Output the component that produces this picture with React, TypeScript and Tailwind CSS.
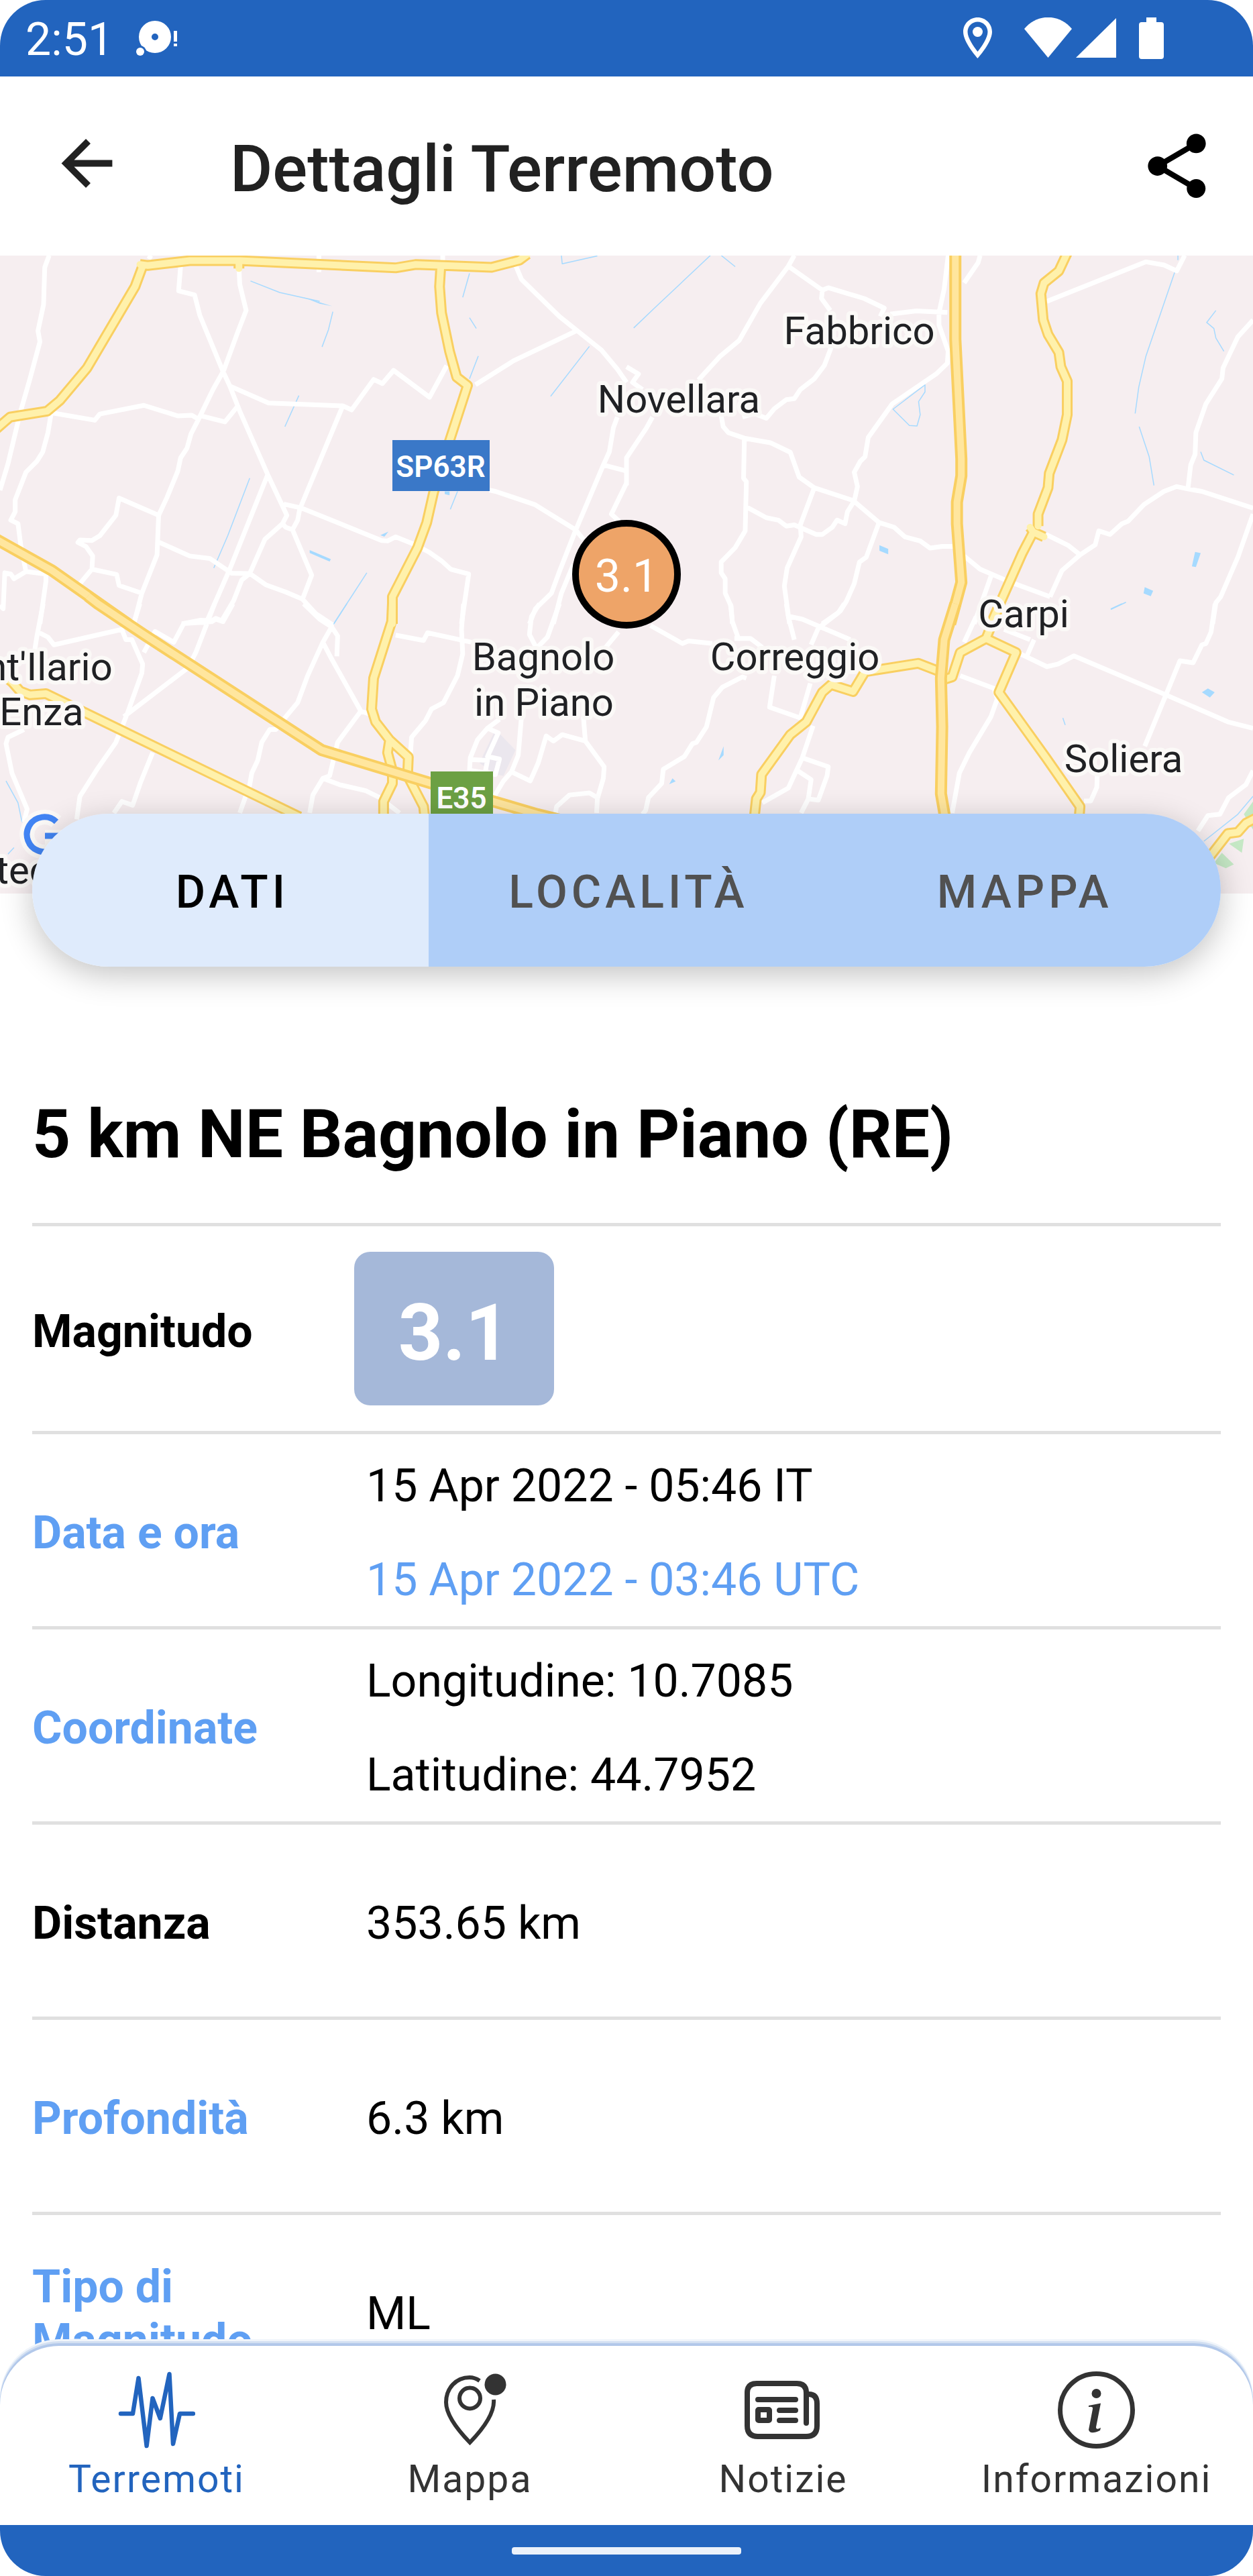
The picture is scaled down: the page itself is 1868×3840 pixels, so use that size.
import { useState } from "react";
import type { ReactNode } from "react";
import { IoArrowBackSharp } from "react-icons/io5";
import { MdShare } from "react-icons/md";

type MapTile = {
  transform: string;
  areas?: { d: string; fill: string }[];
  water: string;
  ponds?: string;
  streets: string;
  roads: string;
  highways: string;
};

// Each tile is drawn on a 1568 square and scaled into place
const TILES: MapTile[] = [
  {
    transform: "translate(0 -11) scale(.5957 .3571)",
    water:
      "M627 137L700 185L800 222M833 265L822 340L806 412M1475 410L1378 618M1197 450L1175 545M1175 105L1158 205M1175 290L1192 335M748 615L713 745M625 960L570 1200L535 1335M918 1355L885 1440L835 1568M1405 30L1407 65L1495 32M1145 1015L1127 1090",
    ponds: "M775 1260L828 1298L825 1308L800 1290L775 1272zM952 1198L972 1183L962 1204zM760 205L832 242L800 232zM1113 1015h12v16l-12-5z",
    streets:
      "M123 30L112 80L109 235L95 345L100 390L75 545L50 690L20 900L0 1010M372 45L378 30M452 75L447 178L487 195L500 280L557 510L575 575L600 680L670 945L718 1115L707 1150L715 1165L732 1175L780 1365L757 1465L790 1525L835 1575M598 80L600 150L616 260L595 350L560 510L533 590L495 720L478 775L468 835L452 875L445 930L418 1040L397 1115L393 1280L355 1440L335 1568M575 575L672 646L858 658L880 675L935 548L957 565L985 510L1075 622L1118 490M858 658L750 1090L745 1135L732 1175M133 688L237 718L250 692L360 656L445 700L480 697L495 712L503 700L563 725L597 655M128 690L120 770L107 850L92 890L65 935L38 1050L38 1100L27 1135L45 1150L52 1240L65 1350L35 1380L27 1360L12 1355L8 1505L0 1490M65 1350L115 1360L115 1390L100 1568M397 1115L298 1043L290 1115L250 1200L230 1220L200 1218L195 1228L215 1245L232 1285L230 1340L200 1400M230 1340L292 1362L298 1408L355 1440M395 1225L475 1285L525 1295L580 1357L625 1358L665 1405L715 1435L757 1465M670 945L575 1340L515 1568M707 1150L663 1215L625 1358L605 1385L585 1470L555 1555L540 1545L530 1555L500 1553L455 1568M710 1068L755 1085L955 1220L970 1222L990 1205L1035 1235L1075 1270L1105 1305L1128 1340L1173 1360L1155 1568M1290 70L1305 130L1400 285L1505 425L1545 505L1568 560M1190 570L1285 470L1440 347M1225 1010L1240 1015L1338 1070L1440 1175L1460 1215M1545 705L1535 750L1525 850L1510 905L1440 1180L1400 1350L1380 1440L1340 1505L1325 1568M1510 905L1568 930M1568 980L1530 1110L1550 1140M1435 1320L1405 1440L1385 1568M798 30V100M1108 30V60",
    roads:
      "M350 68L370 72L475 52L600 52L990 82L1040 68L1110 72L1230 80L1300 50L1320 25M357 75L338 160L218 500L150 635L118 680L25 705L-20 770M598 52V85M1103 80L1100 160L1105 270L1125 430L1143 538L1170 573L1120 830L1085 1020L1068 1145L1045 1250L982 1455L982 1568",
    highways: "M-20 1205L130 1345L320 1568",
  },
  {
    transform: "translate(934 -11) scale(.5957 .3571)",
    water:
      "M210 30L70 250L18 333M237 30L272 77M1380 30V50M1372 100L1300 450L1282 580L1273 690M1283 745L1308 870L1320 990M1475 260L1452 310L1470 335L1475 375L1495 430M1437 850L1445 885L1520 947M747 570L667 672L708 740L727 742L735 695L731 640L747 600zM1212 1508L1250 1478",
    ponds: "M633 1240l22 15v23l-22-15zM1423 1268l14 5l-12 58l-10-3zM1297 1415l21 15l-6 23l-18-12z",
    streets:
      "M420 30L405 75L335 230L282 385L235 450L180 550M405 75L490 175L505 165L595 210L645 250L635 285M490 175L488 210L510 260M805 30L795 170L782 270L782 320L805 430L803 480L775 525L665 650L605 790L597 870L585 890L570 935L578 995L570 1055L553 1100L547 1150L527 1135L515 1165L490 1195L475 1195L420 1155L400 1160L380 1135L350 1125L300 1080M660 275L725 262L803 268M885 30L880 60L845 145M512 415L495 490L470 545L435 590L420 628L400 632L370 670L350 710L320 690L290 705M0 495L30 525L15 560L40 590M237 700L242 745L255 770L295 793L360 812L410 852L432 955L470 1000L567 1053L632 1145L670 1165L697 1205L735 1222L760 1252L790 1245L820 1245M295 793L293 960L300 975L297 1180L272 1250L237 1310L237 1355L247 1380L247 1440L262 1495L265 1568M470 1000L435 1155L437 1205L402 1335L395 1410L408 1568M632 1145L600 1290L583 1310L570 1400L550 1475L535 1515L490 1568M65 705L50 750L0 875L0 990M845 1285L885 1340L955 1390L1060 1455M912 1370L895 1450L870 1568M1050 1195L1105 1240L1135 1280L1090 1345L1060 1455M1135 1280L1173 1238L1182 1180L1210 1195L1240 1150L1255 1140L1295 1070L1345 1015L1377 995L1405 1005L1440 1015L1568 1085M1405 1005L1412 905L1423 860L1425 770L1450 650L1490 545L1493 500L1510 440L1530 370L1568 300M1568 1110L1530 1290L1487 1455L1475 1480L1467 1568M1052 222L1300 57L1345 70L1377 95L1397 30",
    roads:
      "M1103 20L1082 95L1045 145L1037 190L1043 300L1055 360L1082 435L1087 495L1103 555L1103 695L1090 800L1058 940L1055 1000L1030 1110L1030 1160M1010 1165L1018 1185L1045 1205M1018 1185L990 1275L930 1500L912 1568",
    highways: "M823 20V380L838 880L838 950L827 1060L827 1150L838 1395L810 1568",
  },
  {
    transform: "translate(0 519) scale(.5957 .3827)",
    areas: [{ d: "M1240 490L1290 570L1260 670L1240 665L1200 620z", fill: "#ebe7ee" }],
    water: "M868 0L835 80M15 690L45 775L55 850M20 975L35 950",
    streets:
      "M108 0L92 130L85 200M95 110L120 130L135 160L305 100L315 140L330 140L357 235L355 270L318 430L290 540L245 640L200 750L192 840M350 0L330 100M583 0L558 70L540 60L530 70L460 77L435 150L388 108L360 190M537 0L490 190L470 250L310 440M382 580L352 695L332 785L305 770L285 815M60 490L20 520L15 545L30 660L68 800L60 850M760 0L800 60L830 90L845 125L843 205M830 90L808 150L770 280L745 385L710 450L690 490L675 490L655 540L645 610L630 660L625 705L600 815M808 150L830 215L903 418L925 430M903 418L845 540L825 670L808 680L783 745L775 815M808 680L850 705L915 728L950 755L1000 815M990 122L1060 143L1070 113L1180 150M1160 0L1155 100L1158 195L1145 280L1110 385L1080 410L1065 455L1030 520L1027 590M1350 0L1330 50L1325 120L1345 180M1400 0L1370 130L1345 170M1548 110L1510 180M1250 450L1220 485L1195 530L1177 600L1175 650M1220 485L1247 503L1220 595L1250 605L1240 665L1180 650M1177 607L1220 610L1215 650M1305 440L1297 590L1280 655L1260 690L1237 750M1280 655L1327 690L1347 620L1367 515L1385 535L1407 510L1465 535L1460 440M1465 535L1512 635L1510 680L1495 760L1493 815M1390 815L1393 790L1425 745L1475 737L1495 755",
    roads:
      "M982 0L980 70L935 290L930 410L940 460L975 530L1022 597L1020 670L1060 790L1063 830M975 530L970 580L982 650L982 700L960 770L960 830M-10 255L30 305L50 340L75 355L115 350L300 490L750 830",
    highways: "M220 -30L245 0L360 120L805 570L1080 700L1345 820L1500 880",
  },
  {
    transform: "translate(934 519) scale(.5957 .3827)",
    areas: [
      { d: "M1508 935L1545 915L1540 970zM1545 820L1568 770V880zM1470 1010L1490 970L1520 1015L1500 1030z", fill: "#c5e8c5" },
    ],
    water: "M1568 750L1530 820L1445 925M1092 445L1098 472M1212 20L1240 0",
    ponds: "M1440 345L1455 330L1472 345L1460 365zM230 610L243 555L243 590zM107 703L115 680L123 692z",
    streets:
      "M60 85L140 155L155 145L215 155M260 0L265 70L280 135M400 0L405 50L420 140M410 50L440 60L560 140M545 0L530 35L480 95L462 160M270 135L310 135L340 170M300 290L290 285L240 325L218 365L200 480L175 540L165 545L145 595L92 645L88 700L55 755L48 805L40 820M370 280L358 403L435 445L460 310M467 475L440 600L405 718L340 775M440 600L505 635L502 670L480 765L455 760L437 815M428 650L462 685L455 760M875 50L845 150M945 100L1010 140M1020 140L1003 200M985 195L1052 245L1080 235L1120 203L1350 355L1505 460L1568 485M1473 0L1463 110L1450 155L1440 160L1418 230L1385 222L1350 355L1297 555M1178 670L1177 715L1162 768L1145 768M835 280L920 330L928 370L912 440L858 580L833 660L815 815M1568 650L1550 705L1507 755L1485 820L1455 825L1430 885",
    roads:
      "M320 830L325 760L335 735L338 665L410 510L450 460L490 345L512 315L567 342L597 265L730 232L790 268M795 295L815 285L835 190L900 135L975 190L932 345L1050 600L1135 790L1133 830M935 0L900 135M1460 985L1505 895L1530 890L1550 855L1575 835",
    highways: "M823 0L795 140L787 290L790 480L787 740L797 830",
  },
];

const PLACES = [
  { name: "Fabbrico", x: 1281, y: 132 },
  { name: "Novellara", x: 1012, y: 234 },
  { name: "Carpi", x: 1526, y: 554 },
  { name: "Bagnolo", x: 810, y: 618 },
  { name: "in Piano", x: 811, y: 686 },
  { name: "Correggio", x: 1185, y: 618 },
  { name: "Soliera", x: 1675, y: 770 },
  { name: "nt'Ilario", x: 73, y: 633 },
  { name: "Enza", x: 62, y: 700 },
  { name: "tec", x: 34, y: 936 },
];

const TABS = ["DATI", "LOCALITÀ", "MAPPA"];

type Row = {
  label: string;
  highlight?: boolean;
  values: { text: string; highlight?: boolean }[];
};

const ROWS: Row[] = [
  {
    label: "Data e ora",
    highlight: true,
    values: [{ text: "15 Apr 2022 - 05:46 IT" }, { text: "15 Apr 2022 - 03:46 UTC", highlight: true }],
  },
  {
    label: "Coordinate",
    highlight: true,
    values: [{ text: "Longitudine: 10.7085" }, { text: "Latitudine: 44.7952" }],
  },
  { label: "Distanza", values: [{ text: "353.65 km" }] },
  { label: "Profondità", highlight: true, values: [{ text: "6.3 km" }] },
  { label: "Tipo di Magnitudo", highlight: true, values: [{ text: "ML" }] },
];

function StatusBar() {
  return (
    <div className="flex h-[114px] shrink-0 items-center justify-between bg-[#2264be] pr-[132px] pl-[38px] text-white">
      <div className="flex items-center gap-8">
        <span className="pt-1 text-[68px] leading-[80px]">2:51</span>
        <svg viewBox="198 28 64 58" className="h-[58px] w-16" fill="currentColor" aria-hidden="true">
          <path fillRule="evenodd" d="M228 31a24 24 0 1 0 0 48a24 24 0 1 0 0-48zM228 50a5 5 0 1 1 0 10a5 5 0 1 1 0-10z" />
          <circle cx="206" cy="77" r="9" fill="#2264be" />
          <circle cx="206" cy="77" r="6" />
          <path d="M256 46h5v16h-5zM256 65h5v4h-5z" />
        </svg>
      </div>
      <svg viewBox="1436 26 300 62" className="h-[62px] w-[300px]" fill="currentColor" aria-hidden="true">
        <path
          fillRule="evenodd"
          d="M1457.5 26c-12 0-21.5 9.6-21.5 21.5c0 16 21.5 39.5 21.5 39.5s21.5-23.5 21.5-39.5c0-11.9-9.5-21.5-21.5-21.5zM1457.5 32.5c8.3 0 15 6.7 15 15c0 8.6-8.6 21.5-15 29.5c-6.3-8-15-20.8-15-29.5c0-8.3 6.7-15 15-15z"
        />
        <circle cx="1457.5" cy="47.5" r="7.5" />
        <path d="M1527 43c19-23 52-23 71 0l-35.5 43z" />
        <path d="M1664 27v59h-60z" />
        <path d="M1709 26h15v7h7q4 0 4 4v47q0 4-4 4h-29q-4 0-4-4v-47q0-4 4-4h7z" />
      </svg>
    </div>
  );
}

function QuakeMap() {
  return (
    <svg
      viewBox="0 0 1868 951"
      preserveAspectRatio="xMidYMid slice"
      className="block h-[951px] w-full bg-[#f6eef0]"
      role="img"
      aria-label="Mappa"
    >
      {TILES.map((tile) => (
        <g key={tile.transform} transform={tile.transform} fill="none" strokeLinejoin="round">
          {tile.areas?.map((area) => <path key={area.d} d={area.d} fill={area.fill} />)}
          <path d={tile.water} stroke="#a6daff" strokeWidth="1.5" vectorEffect="non-scaling-stroke" />
          {tile.ponds && <path d={tile.ponds} fill="#a6daff" />}
          <path d={tile.streets} stroke="#fff" strokeWidth="7" vectorEffect="non-scaling-stroke" />
        </g>
      ))}
      {TILES.map((tile) => (
        <g key={tile.transform} transform={tile.transform} fill="none" strokeLinejoin="round">
          <path d={tile.roads} stroke="#f9cf61" strokeWidth="16" vectorEffect="non-scaling-stroke" />
        </g>
      ))}
      {TILES.map((tile) => (
        <g key={tile.transform} transform={tile.transform} fill="none" strokeLinejoin="round" strokeLinecap="round">
          <path d={tile.roads} stroke="#fff1ab" strokeWidth="10" vectorEffect="non-scaling-stroke" />
        </g>
      ))}
      {TILES.map((tile) => (
        <g key={tile.transform} transform={tile.transform} fill="none" strokeLinejoin="round">
          <path d={tile.highways} stroke="#f9cf61" strokeWidth="18" vectorEffect="non-scaling-stroke" />
          <path d={tile.highways} stroke="#ffe69e" strokeWidth="10" vectorEffect="non-scaling-stroke" />
        </g>
      ))}

      <g fill="#202124" stroke="#fbf9f7" strokeWidth="12" strokeLinejoin="round" paintOrder="stroke" textAnchor="middle" fontSize="58">
        {PLACES.map((place) => (
          <text key={place.name} x={place.x} y={place.y}>
            {place.name}
          </text>
        ))}
      </g>

      <g fill="#fff" fontSize="44" fontWeight="600" textAnchor="middle">
        <rect x="585" y="275" width="145" height="76" fill="#3a78c8" />
        <text x="657" y="330">SP63R</text>
        <rect x="642" y="769" width="93" height="76" fill="#6ca043" />
        <text x="688" y="824">E35</text>
      </g>

      <g fill="none">
        <path d="M84 844a26 26 0 1 0 8 23H67" stroke="#fbf9f7" strokeWidth="22" strokeLinejoin="round" />
        <path d="M84 844a26 26 0 1 0 8 21H67" stroke="#4285f4" strokeWidth="9" />
      </g>

      <circle cx="934" cy="475" r="76" fill="#eea468" stroke="#000" strokeWidth="10" />
      <text x="934" y="501" fill="#fff" fontSize="68" textAnchor="middle">
        3.1
      </text>
    </svg>
  );
}

function PulseIcon() {
  return (
    <svg viewBox="0 0 115 115" className="size-[115px]" fill="none" stroke="currentColor" strokeWidth="6.5" strokeLinecap="round" strokeLinejoin="round">
      <path d="M4 63H22L30.5 10L42.6 111L51.5 40L62.8 70L76.5 4L82 108L92 63H112" />
    </svg>
  );
}

function PinIcon() {
  return (
    <svg viewBox="0 0 115 115" className="size-[115px]" fill="none" stroke="currentColor" strokeWidth="6">
      <path d="M72 14C67 10.5 62 9 57 9C37 9 22 25 22 46C22 66 42 90 57.5 106C73 90 95 64 93 42" />
      <circle cx="57.5" cy="40" r="15.5" />
      <circle cx="95.5" cy="19.5" r="16" fill="currentColor" stroke="none" />
    </svg>
  );
}

function NewsIcon() {
  return (
    <svg viewBox="0 0 115 115" className="size-[115px]" fill="none" stroke="currentColor" strokeWidth="8" strokeLinecap="round">
      <path d="M92 77V32Q92 18 78 18H18Q4 18 4 32V81Q4 97 20 97H92Q108 97 108 81V48Q108 34 96 34" />
      <path d="M20 42H76M52 58H76M52 73H76" />
      <rect x="20" y="57" width="17" height="16" rx="1" />
    </svg>
  );
}

function InfoIcon() {
  return (
    <svg viewBox="0 0 115 115" className="size-[115px]" fill="currentColor">
      <circle cx="57.5" cy="57.5" r="54" fill="none" stroke="currentColor" strokeWidth="7" />
      <circle cx="57.5" cy="33" r="7" />
      <path d="M46 51L64 47.5L57 83q0 5 7 1l-1 4q-15 7-17-1L52 56q1-4-6-3z" />
    </svg>
  );
}

const NAV: { label: string; icon: ReactNode }[] = [
  { label: "Terremoti", icon: <PulseIcon /> },
  { label: "Mappa", icon: <PinIcon /> },
  { label: "Notizie", icon: <NewsIcon /> },
  { label: "Informazioni", icon: <InfoIcon /> },
];

export default function App() {
  const [tab, setTab] = useState("DATI");
  const [section, setSection] = useState("Terremoti");

  return (
    <div className="flex h-screen flex-col overflow-hidden rounded-[68px] bg-white font-[Roboto,sans-serif] text-black">
      <StatusBar />

      <header className="flex h-[267px] shrink-0 items-center pr-14 pl-[78px]">
        <button type="button" aria-label="Indietro" className="pb-2 text-[#212121]">
          <IoArrowBackSharp className="size-[105px]" />
        </button>
        <h1 className="ml-40 flex-1 pt-2 text-[97px] leading-[112px] font-medium text-[#212121]">
          Dettagli Terremoto
        </h1>
        <button type="button" aria-label="Condividi">
          <MdShare className="size-[115px]" />
        </button>
      </header>

      <main className="min-h-0 flex-1 overflow-y-auto [scrollbar-width:none]">
        <QuakeMap />

        <div className="relative mx-12 -mt-[119px] flex h-[228px] overflow-hidden rounded-full shadow-[0_12px_48px_rgba(0,0,0,0.24)]">
          {TABS.map((name) => (
            <button
              key={name}
              type="button"
              aria-pressed={tab === name}
              onClick={() => setTab(name)}
              className={
                tab === name
                  ? "flex-1 bg-[#dfebfc] pt-1.5 pl-1.5 text-[68px] font-medium tracking-[6px] text-black"
                  : "flex-1 bg-[#afcef8] pt-1.5 pl-1.5 text-[68px] font-medium tracking-[6px] text-[#515151]"
              }
            >
              {name}
            </button>
          ))}
        </div>

        <section className="px-12 pt-[190px]">
          <h2 className="h-48 text-[100px] leading-[120px] font-bold">5 km NE Bagnolo in Piano (RE)</h2>

          <dl className="text-[68px] leading-[80px]">
            <div className="flex h-[310px] items-center border-t-[5px] border-[#e0e0e0]">
              <dt className="w-[480px] shrink-0 pt-2 font-bold">Magnitudo</dt>
              <dd className="flex h-[229px] w-[298px] items-center justify-center rounded-3xl bg-[#a5b8d9] pt-3 text-[116px] font-bold text-white">
                3.1
              </dd>
            </div>
            {ROWS.map((row) => (
              <div key={row.label} className="flex h-[291px] items-center border-t-[5px] border-[#e0e0e0]">
                <dt className={row.highlight ? "w-[480px] shrink-0 pt-2 font-bold text-[#5f9ff3]" : "w-[480px] shrink-0 pt-2 font-bold"}>
                  {row.label}
                </dt>
                <dd className="pt-2 pl-[18px] leading-[140px]">
                  {row.values.map((value) => (
                    <p key={value.text} className={value.highlight ? "text-[#5f9ff3]" : ""}>
                      {value.text}
                    </p>
                  ))}
                </dd>
              </div>
            ))}
          </dl>
        </section>
      </main>

      <nav className="relative -mt-[88px] grid h-[267px] shrink-0 grid-cols-4 rounded-t-[88px] bg-white shadow-[0_-4px_0_#b2c8ea,0_-7px_0_#d3e0f2,0_-10px_0_#f0f5fb]">
        {NAV.map((item) => (
          <button
            key={item.label}
            type="button"
            onClick={() => setSection(item.label)}
            className={
              section === item.label
                ? "flex flex-col items-center gap-3 pt-[38px] text-[#2264be]"
                : "flex flex-col items-center gap-3 pt-[38px] text-[#333333]"
            }
          >
            {item.icon}
            <span className="text-[57px] leading-[68px] tracking-[2px]">{item.label}</span>
          </button>
        ))}
      </nav>

      <div className="flex h-[76px] shrink-0 items-center justify-center bg-[#2264be]">
        <div className="h-[11px] w-[342px] rounded-sm bg-[#ebf1fa]" />
      </div>
    </div>
  );
}
